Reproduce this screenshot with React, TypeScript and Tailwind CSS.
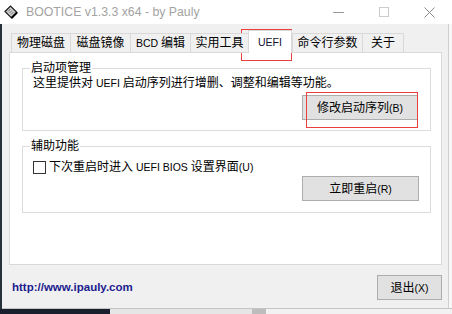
import React from "react";

function L({ children }: { children: React.ReactNode }) {
  return <span className="text-[10.5px]">{children}</span>;
}

function Tab({ w, children }: { w: number; children: React.ReactNode }) {
  return (
    <div
      className="h-[20px] -ml-px first:ml-0 flex items-center justify-center border border-[#d9d9d9] bg-[#f0f0f0] leading-[14px]"
      style={{ width: w }}
    >
      {children}
    </div>
  );
}

function Btn({ w, children }: { w: number; children: React.ReactNode }) {
  return (
    <div
      className="h-[25px] flex items-center justify-center border border-[#adadad] bg-[#e1e1e1] leading-[14px]"
      style={{ width: w }}
    >
      {children}
    </div>
  );
}

export default function App() {
  return (
    <div className="relative w-[452px] h-[314px] overflow-hidden bg-[#f0f0f0] text-black text-[12px] font-['Liberation_Sans','Noto_Sans_CJK_SC',sans-serif] flex flex-col">
      {/* title bar */}
      <div className="h-[24px] shrink-0 bg-white flex items-center">
        <div className="w-[20px] h-full flex items-center justify-center pl-[1px]">
          <svg width="14" height="14" viewBox="0 0 14 14">
            <path d="M1 6.5 L6.5 1 L13 7.5 L7.5 13 Z" fill="#cfcfcf" stroke="#1a1a1a" strokeWidth="1.2" />
            <path d="M7.5 13 L13 7.5" stroke="#000" strokeWidth="2" />
            <path d="M4 6.5 L6.5 4 M5.5 8 L8 5.5 M7 9.5 L9.5 7" stroke="#6a6a6a" strokeWidth="0.9" />
          </svg>
        </div>
        <span className="ml-[6px] text-[12.3px] text-[#a3a3a3] leading-none">BOOTICE v1.3.3 x64 - by Pauly</span>
        <div className="ml-auto flex h-full">
          <div className="w-[45px] flex items-center justify-center">
            <div className="w-[11px] h-px bg-[#9a9a9a]" />
          </div>
          <div className="w-[45px] flex items-center justify-center">
            <div className="w-[10px] h-[10px] border border-[#cccccc]" />
          </div>
          <div className="w-[46px] flex items-center justify-center">
            <svg width="11" height="11" viewBox="0 0 11 11">
              <path d="M0.5 0.5 L10.5 10.5 M10.5 0.5 L0.5 10.5" stroke="#8a8a8a" strokeWidth="1" />
            </svg>
          </div>
        </div>
      </div>

      {/* body */}
      <div className="flex h-[284px] shrink-0">
        <div className="w-[2px] bg-[#26323a]" />
        <div className="w-[446px] flex flex-col pt-[6px] pl-[7px] pr-[6px]">
          {/* tabs */}
          <div className="relative z-10 flex items-end h-[23px] -mb-px pl-[2px]">
            <Tab w={60}>物理磁盘</Tab>
            <Tab w={61}>磁盘镜像</Tab>
            <Tab w={61}>
              <L>BCD&nbsp;</L>编辑
            </Tab>
            <Tab w={59}>实用工具</Tab>
            <div className="-ml-px w-[44px] h-[23px] flex items-start justify-center pt-[4px] border border-b-0 border-[#d9d9d9] bg-white leading-[14px]">
              <span className="text-[10.5px] text-[#101030]">UEFI</span>
            </div>
            <div className="w-[1px]" />
            <Tab w={71}>命令行参数</Tab>
            <Tab w={42}>关于</Tab>
          </div>

          {/* panel */}
          <div className="h-[213px] border border-[#d9d9d9] bg-white pt-[15px] pl-[12px] pr-[10px]">
            {/* group 1 */}
            <div className="relative border border-[#dcdcdc] pl-[10px] pr-[12px] pt-[7px] pb-[10px]">
              <div className="absolute -top-[8px] left-[7px] bg-white px-px leading-[14px]">启动项管理</div>
              <div className="leading-[14px]">
                这里提供对<L>&nbsp;UEFI&nbsp;</L>启动序列进行增删、调整和编辑等功能。
              </div>
              <div className="flex justify-end mt-[5px]">
                <Btn w={116}>
                  修改启动序列<L>(B)</L>
                </Btn>
              </div>
            </div>

            {/* group 2 */}
            <div className="relative mt-[15px] border border-[#dcdcdc] pl-[10px] pr-[11px] pt-[13px] pb-[11px]">
              <div className="absolute -top-[8px] left-[7px] bg-white px-px leading-[14px]">辅助功能</div>
              <div className="flex items-center h-[14px] leading-[14px]">
                <div className="w-[13px] h-[13px] border border-[#333333] bg-white shrink-0" />
                <span className="ml-[3px]">
                  下次重启时进入<L>&nbsp;UEFI BIOS&nbsp;</L>设置界面<L>(U)</L>
                </span>
              </div>
              <div className="flex justify-end mt-[2px]">
                <Btn w={117}>
                  立即重启<L>(R)</L>
                </Btn>
              </div>
            </div>
          </div>

          {/* bottom row */}
          <div className="mt-[10px] flex items-center pl-[3px]">
            <span className="font-bold text-[11.5px] text-[#1c1c8e] leading-none">http://www.ipauly.com</span>
            <div className="ml-auto">
              <Btn w={65}>
                退出<L>(X)</L>
              </Btn>
            </div>
          </div>
        </div>
        <div className="w-px bg-[#d0d0d0]" />
        <div className="w-[3px] bg-[#f7f7f7]" />
      </div>

      <div className="flex h-px shrink-0">
        <div className="w-[2px] bg-[#26323a]" />
        <div className="flex-1 bg-[#c4c4c4]" />
      </div>
      <div className="flex h-[5px] shrink-0">
        <div className="w-[110px] bg-[#1a1f2e]" />
        <div className="w-[142px] bg-[#e6e6e6]" />
        <div className="w-[14px] bg-[#bdbdbd]" />
        <div className="flex-1 bg-[#f2f2f2]" />
      </div>

      {/* red annotation boxes */}
      <div className="absolute left-[241px] top-[29px] w-[51px] h-[32px] border border-[#e8403f]" />
      <div className="absolute left-[306px] top-[92px] w-[112px] h-[36px] border border-[#e8403f]" />
    </div>
  );
}
